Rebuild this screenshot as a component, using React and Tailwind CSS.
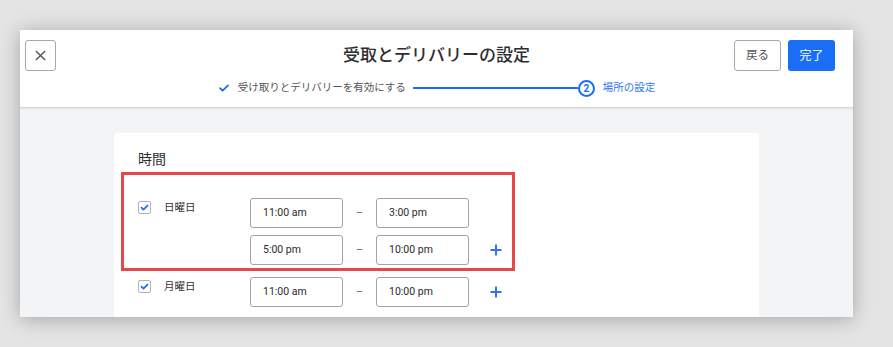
import React from 'react';

const BLUE = '#1a6ef5';

function Check({ className, width = 1.8 }) {
  return (
    <svg viewBox="0 0 12 12" className={className} fill="none">
      <path d="M2 6.2l2.6 2.5L10 3.4" stroke="currentColor" strokeWidth={width} strokeLinecap="round" strokeLinejoin="round" />
    </svg>
  );
}

function Plus() {
  return (
    <svg viewBox="0 0 12 12" className="w-[12px] h-[12px] text-[#2f76f0]" fill="none">
      <path d="M6 0.5v11M0.5 6h11" stroke="currentColor" strokeWidth="2" />
    </svg>
  );
}

function TimeBox({ value }) {
  return (
    <div className="w-[93px] h-[30px] border border-[#a3a3a3] rounded-[3px] flex items-center pl-[12px] text-[10.5px] text-[#2b2b2b]">
      {value}
    </div>
  );
}

function TimeRow({ from, to, plus }) {
  return (
    <div className="flex items-center">
      <TimeBox value={from} />
      <div className="w-[33px] text-center text-[11px] text-[#666]">–</div>
      <TimeBox value={to} />
      <div className="w-[21px]" />
      <div className="w-[12px] flex items-center">{plus && <Plus />}</div>
    </div>
  );
}

function DayRow({ label, ranges }) {
  return (
    <div className="flex items-start">
      <div className="w-[26px] pt-[3px]">
        <div className="w-[13px] h-[13px] border border-[#b3b3b3] rounded-[2px] bg-white flex items-center justify-center">
          <Check className="w-[9px] h-[9px] text-[#1a6ef5]" width={2.4} />
        </div>
      </div>
      <div className="w-[86px] pt-[1px] leading-[18px] text-[10.5px] text-[#333]">{label}</div>
      <div className="flex flex-col gap-[7px]">
        {ranges.map((r, i) => (
          <TimeRow key={i} from={r[0]} to={r[1]} plus={i === ranges.length - 1} />
        ))}
      </div>
    </div>
  );
}

export default function App() {
  return (
    <div
      className="w-[893px] h-[347px] bg-[#e4e4e4] pt-[30px] pl-[20px]"
      style={{ fontFamily: '"Roboto", "Noto Sans CJK JP", sans-serif' }}
    >
      <div className="w-[833px] h-[287px] bg-[#f3f4f6] overflow-hidden shadow-[0_2px_18px_rgba(0,0,0,0.28)] flex flex-col">
        {/* header */}
        <div className="h-[78px] bg-white border-b border-[#d6d6d6] shadow-[0_1px_2px_rgba(0,0,0,0.08)] grid grid-cols-[1fr_auto_1fr] shrink-0 relative z-10">
          <div className="pl-[5px] pt-[10px]">
            <button className="w-[31px] h-[31px] border border-[#a8a8a8] rounded-[3px] flex items-center justify-center text-[#555]">
              <svg viewBox="0 0 12 12" className="w-[11px] h-[11px]" fill="none">
                <path d="M1 1l10 10M11 1L1 11" stroke="currentColor" strokeWidth="1.6" />
              </svg>
            </button>
          </div>
          <div className="flex flex-col items-center pt-[13px]">
            <h1 className="text-[17px] leading-[24px] font-medium text-[#2e2e2e]">受取とデリバリーの設定</h1>
            <div className="flex items-center mt-[12px] h-[18px]">
              <Check className="w-[12px] h-[12px] text-[#1a6ef5]" />
              <span className="ml-[8px] text-[10.5px] text-[#555]">受け取りとデリバリーを有効にする</span>
              <div className="w-[165px] h-[2px] bg-[#1a6ef5] ml-[7px]" />
              <div className="w-[17px] h-[17px] rounded-full border-2 border-[#1a6ef5] flex items-center justify-center text-[10px] font-bold text-[#1a6ef5]">
                2
              </div>
              <span className="ml-[8px] text-[10.5px] text-[#2f76f0]">場所の設定</span>
            </div>
          </div>
          <div className="flex justify-end gap-[7px] pr-[18px] pt-[10px]">
            <button className="w-[47px] h-[31px] border border-[#a8a8a8] rounded-[3px] text-[11.5px] text-[#555]">戻る</button>
            <button className="w-[47px] h-[31px] rounded-[3px] text-[12px] text-white" style={{ backgroundColor: BLUE }}>完了</button>
          </div>
        </div>

        {/* body */}
        <div className="flex-1 flex justify-center pt-[25px]">
          <div className="w-[645px] bg-white rounded-t-[3px] px-[24px] pt-[16px]">
            <h2 className="text-[14px] leading-[20px] text-[#2e2e2e]">時間</h2>
            <div className="mt-[3px] -ml-[17px] w-[394px] border-[3px] border-[#e8474a] pl-[14px] pt-[23px] pb-[3px]">
              <DayRow label="日曜日" ranges={[['11:00 am', '3:00 pm'], ['5:00 pm', '10:00 pm']]} />
            </div>
            <div className="mt-[6px]">
              <DayRow label="月曜日" ranges={[['11:00 am', '10:00 pm']]} />
            </div>
          </div>
        </div>
      </div>
    </div>
  );
}
